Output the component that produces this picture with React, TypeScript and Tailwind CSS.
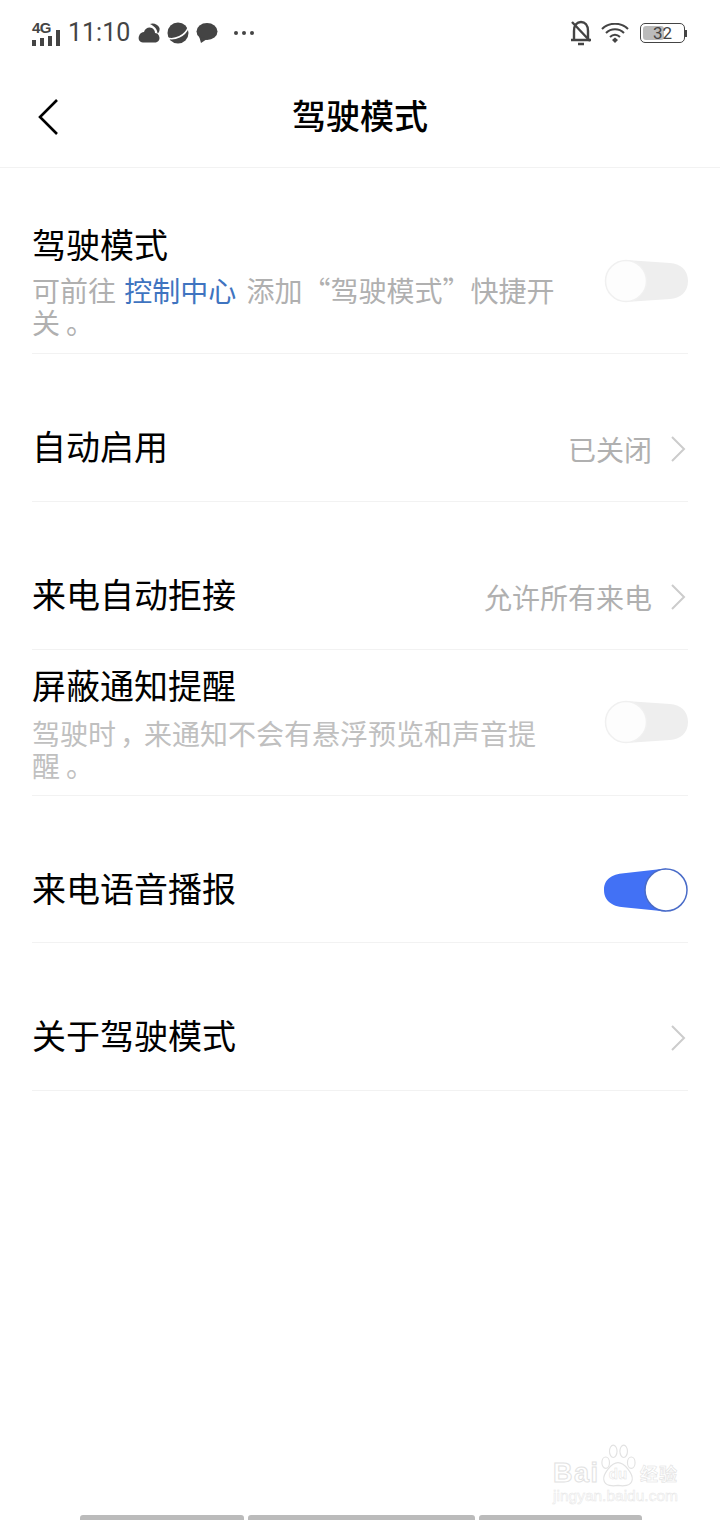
function Toggle({ on = false, className = '' }: { on?: boolean; className?: string }) {
  if (on) {
    return (
      <svg width="84" height="44" viewBox="0 0 84 44" className={`shrink-0 ${className}`}>
        <path d="M62 0.5 L22 5 C10 5.5 0 10 0 22 C0 34 10 39 22 39.5 L62 43.5 Z" fill="#4271f5" />
        <circle cx="62" cy="22" r="21" fill="#ffffff" stroke="#4a6cc8" strokeWidth="1.5" />
      </svg>
    );
  }
  return (
    <svg width="84" height="44" viewBox="0 0 84 44" className={`shrink-0 ${className}`}>
      <path d="M22 1 L66 4 C76 4.5 84 11 84 22 C84 33 76 39.5 66 40 L22 43 Z" fill="#eeeeee" />
      <circle cx="22" cy="22" r="20.5" fill="#fdfdfd" stroke="#f0f0f0" strokeWidth="1.5" />
    </svg>
  );
}

function Chevron() {
  return (
    <svg width="16" height="28" viewBox="0 0 16 28" fill="none" className="ml-[18px] shrink-0">
      <path d="M2 2 L14 14 L2 26" stroke="#cccccc" strokeWidth="2" />
    </svg>
  );
}

function LinkRow({ title, value }: { title: string; value?: string }) {
  return (
    <div className="flex h-[148px] items-end justify-between border-b border-[#f2f2f2] pb-[31px]">
      <div className="mb-[2px] text-[34px] leading-[44px] text-black">{title}</div>
      <div className="-mb-[1px] flex h-[44px] items-center pr-[2px]">
        {value && <span className="text-[28px] leading-[32px] text-[#b0b0b0]">{value}</span>}
        <Chevron />
      </div>
    </div>
  );
}

function StatusBar() {
  return (
    <div className="flex h-[66px] items-center justify-between pl-8 pr-[33px] text-[#444444]">
      <div className="flex items-center">
        <div className="relative h-[25px] w-[29px]">
          <svg width="29" height="25" viewBox="0 0 29 25" fill="#444444">
            <rect x="0" y="19" width="4" height="6" />
            <rect x="8" y="17" width="4" height="8" />
            <rect x="16" y="15" width="4" height="10" />
            <rect x="24" y="9" width="4" height="16" />
          </svg>
          <span className="absolute left-0 top-[-1px] text-[15px] font-bold leading-[15px] tracking-[-0.5px] font-['Liberation_Sans',sans-serif]">4G</span>
        </div>
        <span className="ml-[7px] text-[25px] leading-[34px] font-['Roboto',sans-serif]">11:10</span>
        <svg width="22" height="20" viewBox="0 0 22 20" fill="#444444" className="ml-[8px]">
          <path d="M5 19.5 C1 19.5 0 15.5 1 13 C2 10 4 9 6 9 C7 5 11 3.5 14 5 C17 7 17 9 17 10 C20 10 21.5 13 21.5 15 C21.5 18 19 19.5 17 19.5 Z" />
          <path d="M12 1 C15 -0.5 20 1 21.5 5 C22 8 20.5 10 19.5 10.5 C19.5 6 16 3 12 1 Z" />
        </svg>
        <svg width="22" height="22" viewBox="0 0 22 22" className="ml-[7px]">
          <circle cx="11" cy="11" r="10.5" fill="#444444" />
          <path d="M0 16 C8 18.5 18 14 21.5 5" stroke="#ffffff" strokeWidth="1.6" fill="none" />
        </svg>
        <svg width="22" height="20" viewBox="0 0 22 20" fill="#444444" className="ml-[7px]">
          <ellipse cx="11" cy="8.5" rx="10.5" ry="8.5" />
          <path d="M3 13 L5 20 L11 16 Z" />
        </svg>
        <svg width="22" height="6" viewBox="0 0 22 6" fill="#444444" className="ml-[15px]">
          <circle cx="3" cy="3" r="2" />
          <circle cx="11" cy="3" r="2" />
          <circle cx="19" cy="3" r="2" />
        </svg>
      </div>
      <div className="flex items-center">
        <svg width="24" height="26" viewBox="0 0 24 26" fill="none" stroke="#444444" strokeWidth="2.4">
          <path d="M5 19 L5 11 C5 5 8 2 12 2 C16 2 19 5 19 11 L19 19" />
          <path d="M2 20 L22 20 M9 24 L15 24" />
          <path d="M3 2 L21 21" />
        </svg>
        <svg width="28" height="20" viewBox="0 0 28 20" fill="none" stroke="#444444" strokeWidth="2" className="ml-[8px]">
          <path d="M1 6 C8 -1 20 -1 27 6" />
          <path d="M5 10 C10 5 18 5 23 10" />
          <path d="M9 14 C12 11 16 11 19 14" />
          <path d="M11 17 L14 14.5 L17 17 L14 20 Z" fill="#444444" stroke="none" />
        </svg>
        <div className="ml-[11px] flex items-center">
          <div className="relative h-[20px] w-[45px] rounded-[5px] border border-[#444444] p-[2px]">
            <div className="h-full w-[21px] rounded-[3px] bg-[#bbbbbb]" />
            <span className="absolute inset-0 text-center text-[17px] leading-[18px] font-['Roboto',sans-serif]">32</span>
          </div>
          <div className="h-[7px] w-[2px] bg-[#444444]" />
        </div>
      </div>
    </div>
  );
}

function Watermark() {
  return (
    <div className="absolute left-[553px] top-[1443px] flex w-[128px] flex-col text-white font-['Liberation_Sans',sans-serif] [-webkit-text-stroke:1px_#e2e2e2]">
      <div className="flex items-end">
        <span className="w-[47px] text-[27px] font-bold leading-[30px] tracking-[1.5px]">Bai</span>
        <div className="relative h-[45px] w-[36px]">
          <svg width="36" height="45" viewBox="0 0 38 46" fill="none" stroke="#e2e2e2" strokeWidth="1.2">
            <ellipse cx="6" cy="20" rx="4" ry="6" />
            <ellipse cx="14" cy="8" rx="4" ry="6.5" />
            <ellipse cx="25" cy="8" rx="4" ry="6.5" />
            <ellipse cx="33" cy="20" rx="4" ry="6" />
            <path d="M19 20 C12 20 3 32 4 38 C5 45 14 45 19 44 C24 45 33 45 34 38 C35 32 26 20 19 20 Z" />
          </svg>
          <span className="absolute bottom-[5px] left-0 w-full text-center text-[15px] font-bold leading-[18px] [-webkit-text-stroke:0.5px_#e2e2e2]">du</span>
        </div>
        <span className="ml-[4px] mb-[5px] text-[18px] font-bold leading-[20px] tracking-[1px] font-['Noto_Sans_CJK_SC',sans-serif] [-webkit-text-stroke:0.6px_#e2e2e2]">经验</span>
      </div>
      <span className="-mt-[1px] text-[15.5px] leading-[18px] [-webkit-text-stroke:0.5px_#e6e6e6]">jingyan.baidu.com</span>
    </div>
  );
}

export default function App() {
  return (
    <div lang="zh-CN" className="relative flex h-[1520px] w-[720px] flex-col overflow-hidden bg-white font-['Noto_Sans_CJK_SC',sans-serif]">
      <StatusBar />
      <div className="flex h-[102px] items-center border-b border-[#f2f2f2] pb-[2px]">
        <div className="flex w-[100px] pl-[37px] pt-[2px]">
          <svg width="22" height="38" viewBox="0 0 22 38" fill="none">
            <path d="M20 2 L3 19 L20 36" stroke="#000000" strokeWidth="2.6" />
          </svg>
        </div>
        <div className="flex-1 pb-[2px] pr-[100px] text-center text-[34px] font-medium leading-[44px] text-black">驾驶模式</div>
      </div>

      <div className="flex flex-col px-8">
        <div className="flex h-[186px] items-center justify-between border-b border-[#f2f2f2] pt-[52px] pb-[14px]">
          <div className="w-[526px]">
            <div className="text-[34px] leading-[44px] text-black">驾驶模式</div>
            <p className="mt-2 text-[28px] leading-[32px] text-[#b0b0b0]">
              可前往 <span className="ml-[2px] mr-[4px] text-[#3f74c0]">控制中心</span> 添加“驾驶模式”快捷开关<span className="pl-[6px]">。</span>
            </p>
          </div>
          <Toggle className="mt-[2px]" />
        </div>

        <LinkRow title="自动启用" value="已关闭" />
        <LinkRow title="来电自动拒接" value="允许所有来电" />

        <div className="flex h-[146px] items-center justify-between border-b border-[#f2f2f2] pb-[2px]">
          <div className="w-[526px]">
            <div className="text-[34px] leading-[44px] text-black">屏蔽通知提醒</div>
            <p className="mt-[10px] text-[28px] leading-[32px] text-[#c0c0c0]">
              驾驶时<span className="-mr-[4px] pl-[4px]">，</span>来通知不会有悬浮预览和声音提醒<span className="pl-[6px]">。</span>
            </p>
          </div>
          <Toggle />
        </div>

        <div className="flex h-[147px] items-end justify-between border-b border-[#f2f2f2] pb-[30px]">
          <div className="mb-[2px] text-[34px] leading-[44px] text-black">来电语音播报</div>
          <Toggle on />
        </div>

        <LinkRow title="关于驾驶模式" />
      </div>

      <Watermark />

      <div className="absolute bottom-0 left-[80px] flex h-[5px] gap-[4px]">
        <div className="w-[164px] rounded-t-[3px] bg-[#bbbbbb]" />
        <div className="w-[227px] rounded-t-[3px] bg-[#bbbbbb]" />
        <div className="w-[163px] rounded-t-[3px] bg-[#bbbbbb]" />
      </div>
    </div>
  );
}
